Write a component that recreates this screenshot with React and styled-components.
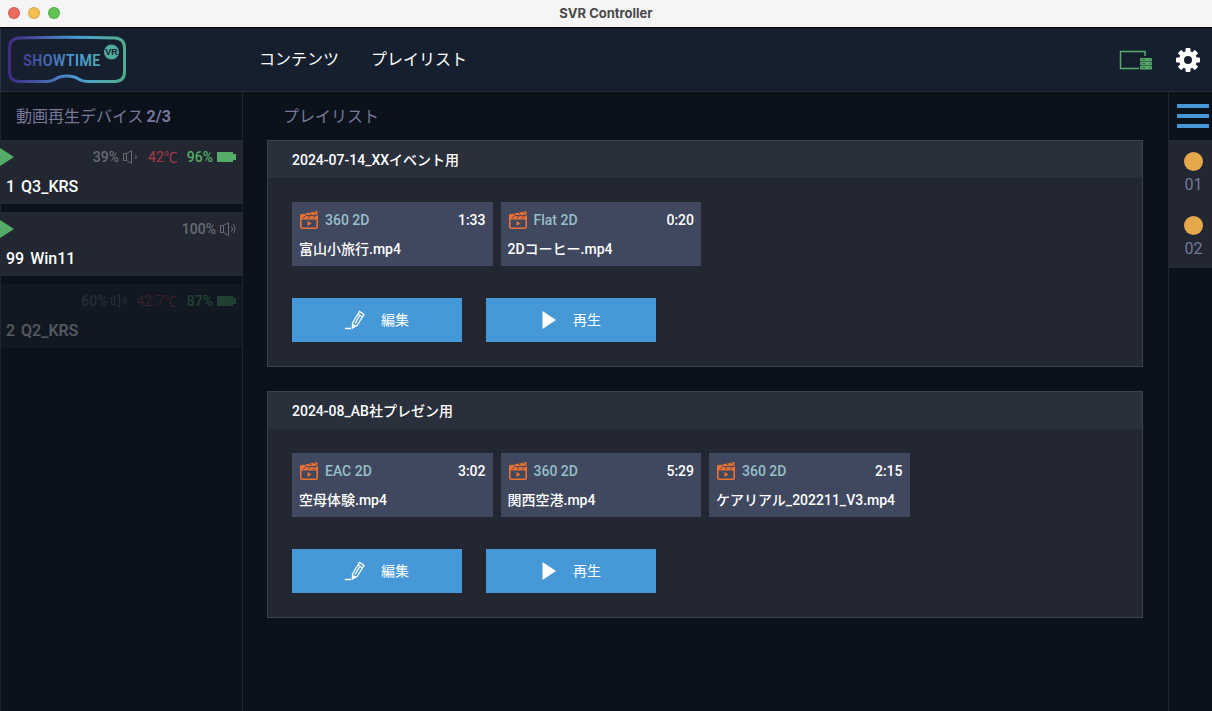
import React from "react";
import styled, { createGlobalStyle } from "styled-components";

const c = {
  page: "#0b121b",
  header: "#161f2d",
  line: "#1f2532",
  panel: "#222731",
  panelHead: "#2a2f3c",
  panelLine: "#3b4153",
  tile: "#3f485e",
  blue: "#4699d6",
  green: "#55ac68",
  red: "#a63a4a",
  muted: "#77779a",
  grey: "#676b75",
  orange: "#ee7030",
  amber: "#e4a84a",
  mode: "#98bfca",
};

const Global = createGlobalStyle`
  *, *::before, *::after { box-sizing: border-box; }
  html { height: 100%; background: ${c.page}; }
  body {
    margin: 0;
    min-height: 100%;
    color: #fff;
    font-family: Roboto, "Noto Sans CJK JP", sans-serif;
    font-size: 14px;
    font-weight: 500;
    line-height: 20px;
  }
  h1, h2, h3, p, ul { margin: 0; padding: 0; font: inherit; }
  ul { list-style: none; }
  svg { display: block; flex: none; }
`;

const Window = styled.div`
  display: flex;
  flex-direction: column;
  min-height: 100vh;
`;

const TitleBar = styled.div`
  display: grid;
  grid-template-columns: 1fr auto 1fr;
  align-items: center;
  height: 28px;
  padding: 0 8px 1px;
  background: #f5f5f5;
  border-bottom: 1px solid #000;
  color: #4a4a4a;
  font-family: "Inter", "Liberation Sans", sans-serif;
  font-size: 13px;
  font-weight: 700;
`;

const Lights = styled.div`
  display: flex;
  gap: 8px;
`;

const Light = styled.button`
  width: 12px;
  height: 12px;
  padding: 0;
  border: 1px solid rgba(0, 0, 0, 0.12);
  border-radius: 50%;
  background: ${(p) => p.$color};
`;

const Header = styled.header`
  display: flex;
  align-items: center;
  height: 64px;
  background: ${c.header};
  border-bottom: 1px solid #242a36;
  border-left: 1px solid #2b3340;
  padding: 0 12px 0 6px;
`;

const Brand = styled.a`
  width: 252px;
`;

const Nav = styled.nav`
  display: flex;
  flex: 1;
  gap: 32px;
`;

const NavLink = styled.a`
  color: #fff;
  font-size: 16px;
  font-weight: 400;
  line-height: 24px;
  text-decoration: none;
`;

const Tools = styled.div`
  display: flex;
  align-items: center;
  gap: 23px;
`;

const IconButton = styled.button`
  padding: 0;
  border: 0;
  background: none;
  color: ${(p) => p.$color || "#fff"};
`;

const Columns = styled.div`
  display: grid;
  grid-template-columns: 243px 1fr 44px;
  flex: 1;
`;

const Sidebar = styled.aside`
  box-shadow: inset 1px 0 #1d2430;
  border-right: 1px solid ${c.line};
`;

const ColumnTitle = styled.h2`
  display: flex;
  align-items: center;
  height: 48px;
  padding: 2px 16px 0;
  color: ${c.muted};
  font-size: 16px;
  font-weight: 400;

  b { margin-left: 3px; font-weight: 700; }
`;

const DeviceList = styled.ul`
  display: flex;
  flex-direction: column;
  gap: 8px;
`;

const DeviceItem = styled.li`
  height: 64px;
  padding: 7px 6px;
  background: ${c.panel};
  opacity: ${(p) => (p.$offline ? 0.3 : 1)};
`;

const DeviceStatus = styled.div`
  display: flex;
  align-items: center;
  justify-content: flex-end;
  height: 20px;
  gap: 9px;
`;

const PlayMark = styled.svg`
  margin: 0 auto 0 -6px;
`;

const Reading = styled.span`
  display: flex;
  align-items: center;
  gap: 4px;
  color: ${(p) => p.$color};
  font-weight: ${(p) => (p.$light ? 400 : 500)};
`;

const DeviceName = styled.p`
  display: flex;
  gap: 6px;
  margin-top: 8px;
  font-size: 16px;
  line-height: 24px;
`;

const Main = styled.main`
  padding: 0 25px 24px 24px;
  min-width: 0;
`;

const Playlists = styled.div`
  display: flex;
  flex-direction: column;
  gap: 24px;
`;

const Card = styled.section`
  border: 1px solid ${c.panelLine};
  background: ${c.panel};
`;

const CardTitle = styled.h3`
  padding: 9px 24px 8px;
  background: ${c.panelHead};
`;

const CardBody = styled.div`
  padding: 24px;
`;

const Tiles = styled.ul`
  display: grid;
  grid-template-columns: repeat(4, 1fr);
  gap: 8px;
`;

const Tile = styled.li`
  height: 64px;
  padding: 8px 7px;
  background: ${c.tile};
`;

const TileTop = styled.div`
  display: flex;
  align-items: center;
  gap: 7px;
`;

const Mode = styled.span`
  flex: 1;
  color: ${c.mode};
`;

const FileName = styled.p`
  margin-top: 9px;
  white-space: nowrap;
`;

const Actions = styled.div`
  display: flex;
  gap: 24px;
  margin-top: 32px;
`;

const Action = styled.button`
  display: flex;
  align-items: center;
  justify-content: center;
  gap: 16px;
  width: 170px;
  height: 44px;
  padding: 0;
  border: 0;
  background: ${c.blue};
  color: #fff;
  font: inherit;
  font-weight: 400;
`;

const Rail = styled.aside`
  border-left: 1px solid ${c.line};
`;

const MenuButton = styled.button`
  display: flex;
  flex-direction: column;
  justify-content: center;
  gap: 6px;
  width: 100%;
  height: 48px;
  padding: 0 3px 0 8px;
  border: 0;
  background: none;
`;

const MenuBar = styled.span`
  width: 32px;
  height: 4px;
  background: ${c.blue};
`;

const Groups = styled.ul`
  background: ${c.panel};
`;

const Group = styled.li`
  display: flex;
  flex-direction: column;
  align-items: center;
  gap: 4px;
  height: 64px;
  padding: 12px 0 0 6px;
  color: ${c.muted};
  font-size: 16px;
  font-weight: 400;

  &::before {
    content: "";
    width: 19px;
    height: 19px;
    border-radius: 50%;
    background: ${c.amber};
  }
`;

const Logo = () => (
  <svg width="120" height="50" viewBox="0 0 120 50" role="img" aria-label="SHOWTIME VR">
    <defs>
      <linearGradient id="brand" gradientUnits="userSpaceOnUse" x1="0" y1="0" x2="120" y2="0">
        <stop offset="0.03" stopColor="#3f2c88" />
        <stop offset="0.25" stopColor="#4456a6" />
        <stop offset="0.58" stopColor="#4b9bd6" />
        <stop offset="0.88" stopColor="#50ac9d" />
        <stop offset="1" stopColor="#50ac88" />
      </linearGradient>
    </defs>
    <path
      d="M12 3 Q60 1.500 108 3 Q117.500 3.500 117.500 13 V37 Q117.500 46 108 46.500 H80 C70 46.500 73 41 60 41 C47 41 50 46.500 40 46.500 H12 Q2.500 46 2.500 37 V13 Q2.500 3.500 12 3 Z"
      fill="none"
      stroke="url(#brand)"
      strokeWidth="3"
    />
    <text x="16" y="31" fill="url(#brand)" fontFamily='"Liberation Sans Narrow", "Roboto Condensed", sans-serif' fontWeight="500" fontSize="17">
      SHOWTIME
    </text>
    <circle cx="104.500" cy="17" r="7.500" fill="url(#brand)" />
    <text x="104.500" y="20" textAnchor="middle" fill={c.header} fontFamily='"Liberation Sans Narrow", sans-serif' fontWeight="700" fontSize="9">
      VR
    </text>
  </svg>
);

const ScreenIcon = () => (
  <svg width="34" height="22" viewBox="0 0 34 22" fill="none" stroke="currentColor" strokeWidth="1.500">
    <path d="M20 19.500 H1.500 V2.500 H26 V7" />
    <g fill="currentColor" stroke="none">
      <rect x="21" y="9" width="12" height="3.500" rx="1" />
      <rect x="21" y="13" width="12" height="3.500" rx="1" />
      <rect x="21" y="17" width="12" height="3.500" rx="1" />
    </g>
    <path d="M22.500 10.700h4M22.500 14.700h4M22.500 18.700h4M30 10.700h1.500M30 14.700h1.500M30 18.700h1.500" stroke={c.header} strokeWidth="0.500" />
  </svg>
);

const GearIcon = () => (
  <svg width="24" height="24" viewBox="0 0 24 24" fill="currentColor">
    <g>
      {[0, 45, 90, 135].map((a) => (
        <rect key={a} x="9.500" y="0" width="5" height="24" rx="1" transform={`rotate(${a} 12 12)`} />
      ))}
      <circle cx="12" cy="12" r="9" />
    </g>
    <circle cx="12" cy="12" r="4" fill={c.header} />
  </svg>
);

const Speaker = ({ waves }) => (
  <svg width="16" height="16" viewBox="0 0 16 16" fill="none" stroke="currentColor" strokeWidth="1">
    <path d="M0.500 4.500h3v7h-3zM3.500 4.500L8.500 1.500v13L3.500 11.500" />
    {waves > 1 && <path d="M11.500 5.500q2 2.500 0 5M13.500 3.500q3 4.500 0 9" />}
    {waves === 1 && <path d="M12.500 6q1.500 2 0 4" />}
  </svg>
);

const Battery = () => (
  <svg width="19" height="10" viewBox="0 0 19 10" fill="currentColor">
    <path d="M0 0h16v2h3v6h-3v2H0z" />
  </svg>
);

const ClapIcon = () => (
  <svg width="19" height="20" viewBox="-1 0 19 20" fill="none" stroke={c.orange}>
    <rect x="0.800" y="5" width="16.400" height="13.200" rx="1.500" strokeWidth="1.600" />
    <path d="M0 4.500L17.500 1V4L10 5.500H18V9.500H0z" fill={c.orange} stroke="none" />
    <path d="M4 3.200l2.500 2M9 2.200l2.500 2M13.500 1.400l2 2M5 6l-2 2.500M10 6l-2 2.500M15 6l-2 2.500M6 5.600H17" stroke={c.tile} strokeWidth="1" />
    <path d="M7.500 11v5l4-2.500z" fill={c.orange} stroke="none" />
  </svg>
);

const PencilIcon = () => (
  <svg width="20" height="20" viewBox="0 0 20 20" fill="none" stroke="currentColor" strokeWidth="1.500">
    <path d="M0 18.500h6" />
    <path d="M7.500 13L14.500 1.500l4.500 3L12 15.500L7.500 17.500zM13 4l4.500 3M14.500 6L10 13.500" strokeWidth="1.300" />
    <path d="M7 13.500l5 2.500-5.300 3.200z" fill="currentColor" stroke="none" />
  </svg>
);

const PlayIcon = () => (
  <svg width="16" height="18" viewBox="0 0 16 18" fill="currentColor">
    <path d="M1.500 0L15 9L1.500 18z" />
  </svg>
);

const Device = ({ id, name, playing, volume, waves, temp, battery, offline }) => (
  <DeviceItem $offline={offline}>
    <DeviceStatus>
      {playing && (
        <PlayMark width="14" height="18" viewBox="0 0 14 18" fill={c.green} aria-label="再生中">
          <path d="M0 0L14 9L0 18z" />
        </PlayMark>
      )}
      <Reading $color={c.grey}>
        {volume}
        <Speaker waves={waves} />
      </Reading>
      {temp && <Reading $color={c.red} $light>{temp}℃</Reading>}
      {battery && (
        <Reading $color={c.green}>
          {battery}
          <Battery />
        </Reading>
      )}
    </DeviceStatus>
    <DeviceName>
      <span>{id}</span>
      <span>{name}</span>
    </DeviceName>
  </DeviceItem>
);

const Playlist = ({ title, videos }) => (
  <Card>
    <CardTitle>{title}</CardTitle>
    <CardBody>
      <Tiles>
        {videos.map(([mode, length, file]) => (
          <Tile key={file}>
            <TileTop>
              <ClapIcon />
              <Mode>{mode}</Mode>
              <span>{length}</span>
            </TileTop>
            <FileName>{file}</FileName>
          </Tile>
        ))}
      </Tiles>
      <Actions>
        <Action type="button">
          <PencilIcon />
          編集
        </Action>
        <Action type="button">
          <PlayIcon />
          再生
        </Action>
      </Actions>
    </CardBody>
  </Card>
);

const devices = [
  { id: "1", name: "Q3_KRS", playing: true, volume: "39%", waves: 1, temp: "42", battery: "96%" },
  { id: "99", name: "Win11", playing: true, volume: "100%", waves: 2 },
  { id: "2", name: "Q2_KRS", volume: "60%", waves: 2, temp: "42.7", battery: "87%", offline: true },
];

const playlists = [
  {
    title: "2024-07-14_XXイベント用",
    videos: [
      ["360 2D", "1:33", "富山小旅行.mp4"],
      ["Flat 2D", "0:20", "2Dコーヒー.mp4"],
    ],
  },
  {
    title: "2024-08_AB社プレゼン用",
    videos: [
      ["EAC 2D", "3:02", "空母体験.mp4"],
      ["360 2D", "5:29", "関西空港.mp4"],
      ["360 2D", "2:15", "ケアリアル_202211_V3.mp4"],
    ],
  },
];

export default function App() {
  return (
    <Window>
      <Global />
      <TitleBar>
        <Lights>
          <Light type="button" aria-label="閉じる" $color="#ed6a5e" />
          <Light type="button" aria-label="しまう" $color="#f4bf4f" />
          <Light type="button" aria-label="拡大" $color="#61c554" />
        </Lights>
        <span>SVR Controller</span>
      </TitleBar>
      <Header>
        <Brand href="#">
          <Logo />
        </Brand>
        <Nav>
          <NavLink href="#contents">コンテンツ</NavLink>
          <NavLink href="#playlists">プレイリスト</NavLink>
        </Nav>
        <Tools>
          <IconButton type="button" aria-label="画面" $color={c.green}>
            <ScreenIcon />
          </IconButton>
          <IconButton type="button" aria-label="設定">
            <GearIcon />
          </IconButton>
        </Tools>
      </Header>
      <Columns>
        <Sidebar>
          <ColumnTitle>
            動画再生デバイス<b>2/3</b>
          </ColumnTitle>
          <DeviceList>
            {devices.map((d) => (
              <Device key={d.id} {...d} />
            ))}
          </DeviceList>
        </Sidebar>
        <Main>
          <ColumnTitle>プレイリスト</ColumnTitle>
          <Playlists>
            {playlists.map((p) => (
              <Playlist key={p.title} {...p} />
            ))}
          </Playlists>
        </Main>
        <Rail>
          <MenuButton type="button" aria-label="メニュー">
            <MenuBar />
            <MenuBar />
            <MenuBar />
          </MenuButton>
          <Groups>
            <Group>01</Group>
            <Group>02</Group>
          </Groups>
        </Rail>
      </Columns>
    </Window>
  );
}
